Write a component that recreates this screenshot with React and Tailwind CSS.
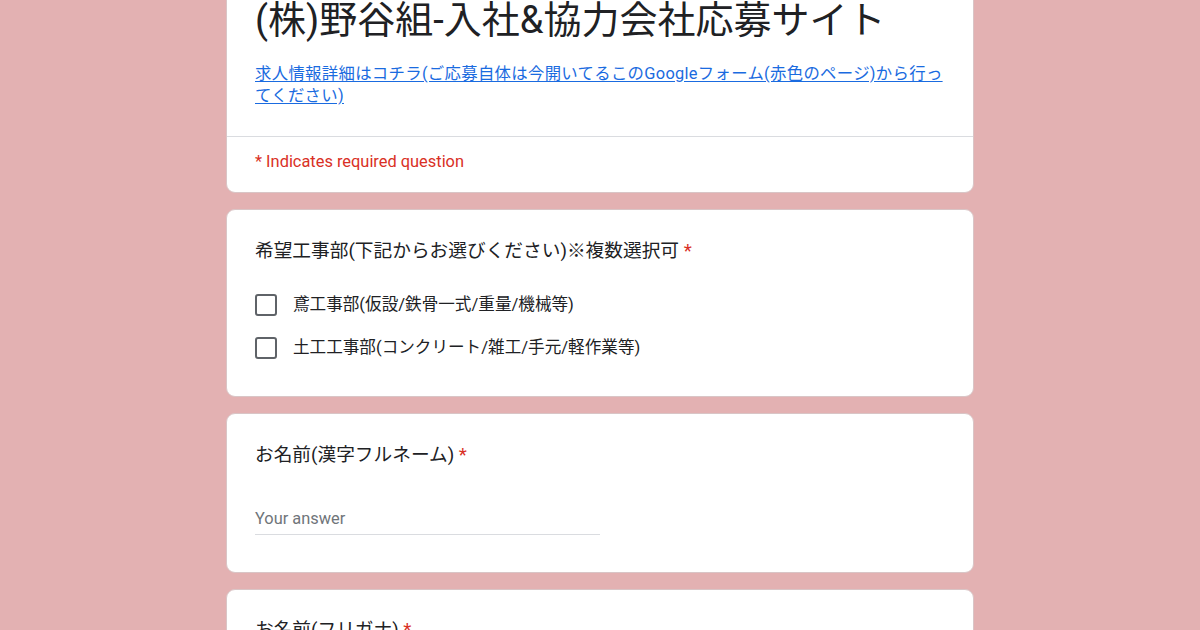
export default function App() {
  const font = { fontFamily: 'Roboto, "Noto Sans CJK JP", sans-serif' };
  return (
    <div className="w-full h-[630px] overflow-hidden bg-[#e3b1b2] flex justify-center" style={font}>
      <div className="w-[748px] flex flex-col gap-[16px] -mt-[31px] shrink-0">
        {/* Header card */}
        <div className="shrink-0 bg-white rounded-[9px] border border-[#d9c5c6] overflow-hidden">
          <div className="px-[28px] pt-[28px] pb-[29px]">
            <h1 className="text-[38px] leading-[44px] text-[#202124] font-normal">(株)野谷組-入社&amp;協力会社応募サイト</h1>
            <div className="mt-[21px] text-[16.4px] leading-[22px] tracking-[0.3px]">
              <a href="#" className="text-[#1a6be0] underline underline-offset-[2px]">
                求人情報詳細はコチラ(ご応募自体は今開いてるこのGoogleフォーム(赤色のページ)から行ってください)
              </a>
            </div>
          </div>
          <div className="border-t border-[#dadce0] px-[28px] pt-[14px] pb-[19px]">
            <div className="text-[16.4px] leading-[22px] text-[#d93025]">* Indicates required question</div>
          </div>
        </div>

        {/* Question 1 */}
        <div className="shrink-0 bg-white rounded-[9px] border border-[#d9c5c6] px-[28px] pt-[29px] pb-[27px]">
          <div className="text-[18.7px] leading-[24px] text-[#202124]">
            希望工事部(下記からお選びください)※複数選択可 <span className="text-[#d93025]">*</span>
          </div>
          <div className="mt-[20px] flex flex-col">
            {["鳶工事部(仮設/鉄骨一式/重量/機械等)", "土工工事部(コンクリート/雑工/手元/軽作業等)"].map((t) => (
              <div key={t} className="h-[43px] flex items-center">
                <div className="w-[22px] h-[22px] rounded-[3px] border-2 border-[#5f6368] shrink-0" />
                <span className="ml-[16px] text-[16.6px] leading-[22px] text-[#202124]">{t}</span>
              </div>
            ))}
          </div>
        </div>

        {/* Question 2 */}
        <div className="shrink-0 bg-white rounded-[9px] border border-[#d9c5c6] px-[28px] pt-[29px] pb-[37px]">
          <div className="text-[18.7px] leading-[24px] text-[#202124]">
            お名前(漢字フルネーム) <span className="text-[#d93025]">*</span>
          </div>
          <div className="mt-[40px] w-[345px] border-b border-[#dadce0] pb-[3px]">
            <div className="text-[16.4px] leading-[24px] text-[#70757a]">Your answer</div>
          </div>
        </div>

        {/* Question 3 */}
        <div className="shrink-0 bg-white rounded-[9px] border border-[#d9c5c6] px-[28px] pt-[28px] pb-[37px]">
          <div className="text-[18.7px] leading-[24px] text-[#202124]">
            お名前(フリガナ) <span className="text-[#d93025]">*</span>
          </div>
          <div className="mt-[40px] w-[345px] border-b border-[#dadce0] pb-[3px]">
            <div className="text-[16.4px] leading-[24px] text-[#70757a]">Your answer</div>
          </div>
        </div>
      </div>
    </div>
  );
}
